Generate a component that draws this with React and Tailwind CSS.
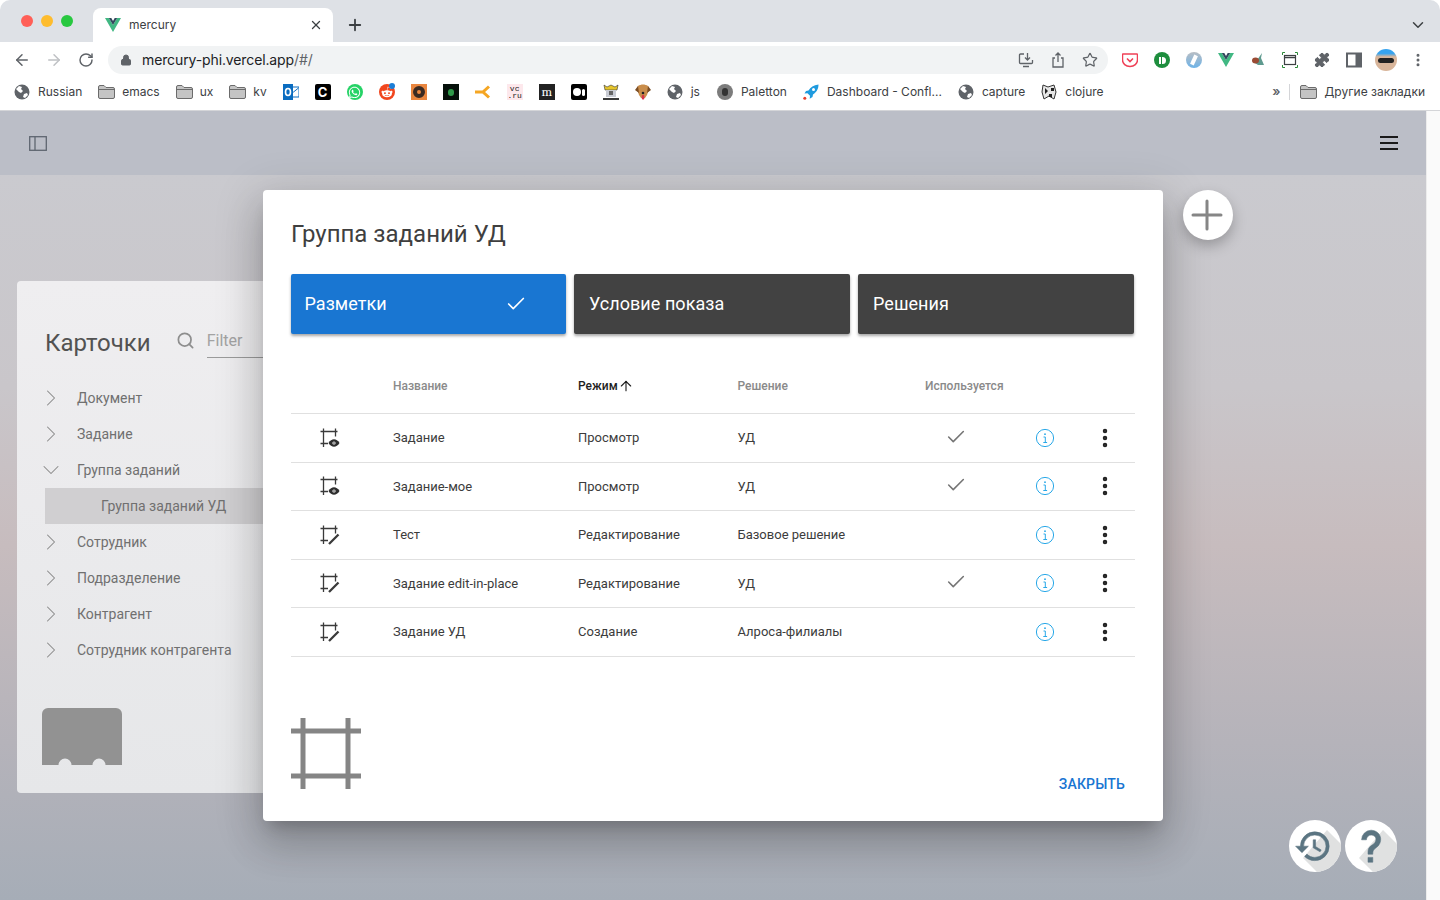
import React from 'react';
import { ChevronRight, ChevronDown, Search, Check, ArrowUp, ArrowLeft, ArrowRight, RotateCw, Lock, Plus, X, Star, Puzzle, EllipsisVertical } from 'lucide-react';
import { FaWhatsapp, FaRedditAlien } from 'react-icons/fa';

const font = { fontFamily: 'Roboto, sans-serif' };

function Globe() {
  return (
    <svg viewBox="0 0 16 16" className="w-4 h-4 shrink-0">
      <circle cx="8" cy="8" r="7.5" fill="#5f6368" />
      <path d="M2 5l3-3 3 1-1 2 2 2-2 2-2-1-3-3zM10 10l3-1 1 2-3 3-2-1z" fill="#fff" />
    </svg>
  );
}

function Folder() {
  return (
    <svg viewBox="0 0 17 14" className="w-[17px] h-[14px] shrink-0 -mr-px">
      <path d="M.5 2A1.5 1.5 0 0 1 2 .5h4l2 2h7A1.5 1.5 0 0 1 16.5 4v8a1.5 1.5 0 0 1-1.5 1.5H2A1.5 1.5 0 0 1 .5 12z" fill="#c4c4c4" stroke="#6b6b6b" />
      <path d="M1 4.5h15" stroke="#6b6b6b" />
    </svg>
  );
}

function VueLogo({ className }) {
  return (
    <svg viewBox="0 0 16 14" className={className}>
      <path d="M0 0h3.8L8 7l4.200-7H16L8 14z" fill="#41b883" />
      <path d="M3.8 0H6.3L8 3l1.700-3h2.500L8 7z" fill="#34495e" />
    </svg>
  );
}

function Favicon({ children, className }) {
  return <div className={`relative w-4 h-4 shrink-0 flex items-center justify-center overflow-hidden ${className}`}>{children}</div>;
}

function Bookmark({ icon, label, className = '' }) {
  return (
    <div className={`flex items-center gap-2 shrink-0 ${className}`}>
      {icon}
      <span>{label}</span>
    </div>
  );
}

function BookmarksBar() {
  return (
    <div className="h-[33px] bg-white border-b border-[#d4d5d8] flex items-center pl-[14px] pr-[15px] pb-[4px] text-xs text-[#3c4043] shrink-0" style={{ fontFamily: 'Inter, sans-serif' }}>
      <div className="flex items-center gap-4">
        <Bookmark icon={<Globe />} label="Russian" />
        <Bookmark icon={<Folder />} label="emacs" />
        <Bookmark icon={<Folder />} label="ux" />
        <Bookmark icon={<Folder />} label="kv" />
        <svg viewBox="0 0 16 16" className="w-4 h-4 shrink-0">
          <rect x="5" y="3" width="11" height="10" fill="#fff" stroke="#0a6cc0" />
          <path d="M5.500 4l5 4 5-4" fill="none" stroke="#0a6cc0" />
          <rect width="10" height="16" fill="#0a6cc0" />
          <ellipse cx="5" cy="8" rx="2.500" ry="3.500" fill="none" stroke="#fff" strokeWidth="1.600" />
        </svg>
        <Favicon className="bg-black rounded-[2px] text-white text-[13px] leading-4 font-bold">C</Favicon>
        <Favicon className="bg-[#25d366] rounded-full text-white text-[13px]"><FaWhatsapp /></Favicon>
        <Favicon className="rounded-full text-white text-[12px] overflow-visible">
          <div className="absolute inset-0 rounded-full bg-[#f1461e]" />
          <FaRedditAlien className="relative" />
          <div className="absolute -top-[1px] right-0 w-[6px] h-[6px] rounded-full bg-[#1c7ed6]" />
        </Favicon>
        <Favicon className="bg-[#e9863f]">
          <div className="w-[12px] h-[12px] rounded-full border-[4px] border-[#3a2a22]" />
        </Favicon>
        <Favicon className="bg-[#06100a]">
          <div className="w-[6px] h-[7px] bg-[#2f9a4a] rounded-full" />
        </Favicon>
        <svg viewBox="0 0 16 16" className="w-4 h-4 shrink-0" fill="none" stroke="#f5a623" strokeWidth="3">
          <path d="M0 8h8M14 2.500L8 8l6 5.500" />
        </svg>
        <Favicon className="bg-[#fde8ec] text-[#222] text-[8px] leading-[7px] text-center" >
          <span style={{ fontFamily: '"Liberation Mono", monospace' }}>vc<br />.ru</span>
        </Favicon>
        <Favicon className="bg-[#222] text-white text-[13px] leading-4 font-serif">m</Favicon>
        <Favicon className="bg-black rounded-[2px] gap-[1px]">
          <div className="w-2 h-2 rounded-full bg-white" />
          <div className="w-[3px] h-[7px] rounded-full bg-white" />
        </Favicon>
        <svg viewBox="0 0 16 16" className="w-4 h-4 shrink-0">
          <path d="M1 1l3 2 4-2 4 2 3-2-1 5H2z" fill="#e6c52b" stroke="#333" strokeWidth=".6" />
          <rect x="3" y="6" width="10" height="7" fill="#c9ccd4" />
          <rect x="6" y="7" width="4" height="4" fill="#666" />
          <path d="M0 14h16v2H0z" fill="#3a3a3a" />
        </svg>
        <svg viewBox="0 0 16 16" className="w-4 h-4 shrink-0">
          <path d="M3 2c3-2 7-2 10 0l2 4-2 2-1 3-2 3H6l-2-3-1-3-2-2z" fill="#c98d4b" />
          <path d="M0 6l3-4 1 7zM16 6l-3-4-1 7z" fill="#7a4d24" />
          <circle cx="8" cy="9" r="1.300" fill="#222" />
          <rect x="6.800" y="11" width="2.500" height="4.500" rx="1" fill="#d8344a" />
        </svg>
        <Bookmark icon={<Globe />} label="js" />
        <Bookmark
          className="ml-px"
          icon={
            <div className="w-4 h-4 rounded-full bg-[#7c7c7c] flex items-center justify-center shrink-0">
              <div className="w-[6px] h-2 rounded-full bg-[#333]" />
            </div>
          }
          label="Paletton"
        />
        <Bookmark
          icon={
            <svg viewBox="0 0 16 16" className="w-4 h-4 shrink-0">
              <path d="M15.500.5c-5 .5-8 2.500-10 6L3 7 1.500 9.500l3-.3 2.500 2.500-.3 3L9.500 13l.5-2.500c3-2 5.500-5 5.500-10z" fill="#1f9bdf" />
              <circle cx="10.500" cy="5.500" r="1.500" fill="#fff" />
              <circle cx="1.800" cy="14.200" r="1.500" fill="#e8402c" />
            </svg>
          }
          label="Dashboard - Confl..."
        />
        <Bookmark icon={<Globe />} label="capture" />
        <Bookmark
          icon={
            <svg viewBox="0 0 16 16" className="w-4 h-4 shrink-0">
              <path d="M2 1l5 2 6-2 2 7-2 7-5-3-5 3-2-7z" fill="#e6e6e6" stroke="#333" strokeWidth="1" />
              <path d="M4 4l3 3-3 3zM10 4h3v3h-3zM8 10h3v3H8z" fill="#222" />
            </svg>
          }
          label="clojure"
        />
      </div>
      <div className="ml-auto flex items-center">
        <span className="text-[13px] font-semibold text-[#5f6368]">»</span>
        <div className="w-px h-4 bg-[#d4d5d8] ml-[9px] mr-[10px]" />
        <Bookmark icon={<Folder />} label="Другие закладки" />
      </div>
    </div>
  );
}

function BrowserChrome() {
  return (
    <>
      <div className="h-[42px] bg-[#dee1e6] rounded-t-[10px] flex items-end relative shrink-0">
        <div className="flex gap-2 absolute left-[21px] top-[15px]">
          <div className="w-3 h-3 rounded-full bg-[#ff5f57]" />
          <div className="w-3 h-3 rounded-full bg-[#febc2e]" />
          <div className="w-3 h-3 rounded-full bg-[#28c840]" />
        </div>
        <div className="ml-[93px] w-[240px] h-[34px] bg-white rounded-t-[8px] flex items-center pl-[12px] pr-[10px] text-xs text-[#3c4043]" style={{ fontFamily: 'Inter, sans-serif' }}>
          <VueLogo className="w-4 h-[14px]" />
          <span className="ml-2">mercury</span>
          <X className="w-[14px] h-[14px] ml-auto text-[#3c4043]" strokeWidth={2.2} />
        </div>
        <Plus className="w-[18px] h-[18px] ml-[13px] mb-2 text-[#3c4043]" strokeWidth={2.4} />
        <ChevronDown className="w-[18px] h-[18px] ml-auto mr-[13px] mb-2 text-[#3c4043]" strokeWidth={2} />
      </div>
      <div className="h-9 bg-white flex items-center pl-[13px] pr-[13px] shrink-0">
        <ArrowLeft className="w-[18px] h-[18px] text-[#5f6368]" strokeWidth={2} />
        <ArrowRight className="w-[18px] h-[18px] ml-[14px] text-[#bfc1c4]" strokeWidth={2} />
        <RotateCw className="w-4 h-4 ml-[15px] text-[#5f6368]" strokeWidth={2.2} />
        <div className="ml-[14px] w-[1000px] h-7 rounded-full bg-[#f1f3f4] flex items-center pl-3 pr-[10px]">
          <Lock className="w-3 h-3 text-[#5f6368]" fill="#5f6368" strokeWidth={2} />
          <span className="ml-[10px] text-sm tracking-[-0.12px] text-[#202124]" style={{ fontFamily: 'Inter, sans-serif' }}>mercury-phi.vercel.app<span className="text-[#5f6368]">/#/</span></span>
          <div className="ml-auto flex items-center gap-4 text-[#5f6368]">
            <svg viewBox="0 0 16 16" className="w-4 h-4" fill="none" stroke="#5f6368" strokeWidth="1.300">
              <path d="M6 2H2.500a1 1 0 0 0-1 1v7.500a1 1 0 0 0 1 1h11a1 1 0 0 0 1-1V8" />
              <path d="M5 14.500h6M9.500 1v6.500M7 5.500l2.500 2.500L12 5.500" />
            </svg>
            <svg viewBox="0 0 16 16" className="w-4 h-4" fill="none" stroke="#5f6368" strokeWidth="1.300">
              <path d="M8 1v9M5.500 3.500L8 1l2.500 2.500M5 6H3v9h10V6h-2" />
            </svg>
            <Star className="w-4 h-4" strokeWidth={1.8} />
          </div>
        </div>
        <div className="ml-[14px] flex items-center gap-4">
          <svg viewBox="0 0 16 16" className="w-4 h-4">
            <path d="M1 2h14a.5.5 0 0 1 .5.5V8a7.500 6.500 0 0 1-15 0V2.500A.5.5 0 0 1 1 2z" fill="none" stroke="#ef4056" strokeWidth="1.500" />
            <path d="M5 6.500l3 3 3-3" fill="none" stroke="#ef4056" strokeWidth="1.600" />
          </svg>
          <div className="w-4 h-4 rounded-full bg-[#1e8e3e] flex items-center justify-center gap-[1px]">
            <div className="w-[2px] h-[7px] bg-white" />
            <div className="w-[4px] h-[7px] rounded-r-full bg-white" />
          </div>
          <div className="w-4 h-4 rounded-full bg-[linear-gradient(180deg,#b9bec4,#6db3e8)] flex items-center justify-center">
            <div className="w-[4px] h-[10px] bg-white rotate-[25deg]" />
          </div>
          <VueLogo className="w-4 h-[14px]" />
          <svg viewBox="0 0 16 16" className="w-4 h-4">
            <path d="M12 1l-1 5 3 7H8L5 11z" fill="#5e9a8f" />
            <ellipse cx="5.500" cy="8.500" rx="3.500" ry="3" fill="#9a4b34" />
          </svg>
          <svg viewBox="0 0 16 16" className="w-4 h-4" fill="none">
            <rect x="2.500" y="3.500" width="11" height="9" stroke="#3c4043" strokeWidth="1.200" />
            <path d="M2.500 5.500h11" stroke="#3c4043" strokeWidth="1.500" />
            <path d="M0.500 3V.5H3M13 .5h2.500V3M15.500 13v2.500H13M3 15.500H.5V13" stroke="#2e8b3a" strokeWidth="1" />
          </svg>
          <Puzzle className="w-4 h-4 text-[#5f6368]" fill="#5f6368" strokeWidth={1.5} />
          <svg viewBox="0 0 16 16" className="w-4 h-4">
            <rect x="1" y="1.500" width="14" height="13" fill="#fff" stroke="#5f6368" strokeWidth="2" />
            <rect x="9.500" y="1.500" width="5.500" height="13" fill="#5f6368" />
          </svg>
          <div className="w-[22px] h-[22px] -mx-[3px] rounded-full bg-[linear-gradient(180deg,#36a3ef_20%,#d8b59a_35%)] flex items-center justify-center overflow-hidden">
            <div className="w-[16px] h-[5px] bg-[#222] rounded-sm" />
          </div>
          <EllipsisVertical className="w-4 h-4 text-[#5f6368]" strokeWidth={2.5} />
        </div>
      </div>
      <BookmarksBar />
    </>
  );
}

const tree = [
  { label: 'Документ' },
  { label: 'Задание' },
  { label: 'Группа заданий', open: true },
  { label: 'Группа заданий УД', child: true },
  { label: 'Сотрудник' },
  { label: 'Подразделение' },
  { label: 'Контрагент' },
  { label: 'Сотрудник контрагента' },
];

function CardsPanel() {
  return (
    <div className="w-[400px] h-[512px] rounded-[4px] bg-[linear-gradient(180deg,#efeef0,#e6e7e9)] pl-7 pt-[44px]">
      <div className="flex items-start">
        <h2 className="text-2xl leading-9 text-[#525252]">Карточки</h2>
        <Search className="w-[19px] h-[19px] ml-[25px] mt-[6px] text-[#8e8e8e]" strokeWidth={2.2} />
        <div className="ml-[12px] mt-px w-[180px] h-[32px] border-b border-[#9b9b9b] text-base leading-[30px] text-[#a3a3a3]">Filter</div>
      </div>
      <div className="mt-[19px] text-sm text-[#707070]">
        {tree.map(item => (
          item.child ? (
            <div key={item.label} className="h-9 bg-[#d0cfd1] pl-14 flex items-center">{item.label}</div>
          ) : (
            <div key={item.label} className="h-9 flex items-center">
              {item.open
                ? <ChevronDown className="w-7 h-7 -ml-2 text-[#888]" strokeWidth={0.9} />
                : <ChevronRight className="w-7 h-7 -ml-2 text-[#888]" strokeWidth={0.9} />}
              <span className="ml-[12px]">{item.label}</span>
            </div>
          )
        ))}
      </div>
      <svg viewBox="0 0 80 57" className="w-20 h-[57px] mt-[40px] -ml-[3px]">
        <path d="M0 6a6 6 0 0 1 6-6h68a6 6 0 0 1 6 6v51H63.500a6.500 6.500 0 0 0-13 0h-21a6.500 6.500 0 0 0-13 0H0z" fill="#929292" />
      </svg>
    </div>
  );
}

function LayoutIcon({ kind }) {
  return (
    <svg viewBox="0 0 20 20" className="w-5 h-5" fill="none" stroke="#3a3a3a" strokeWidth="1.300">
      <path d="M0.500 3.500h17M3.500 0.500v18.500" />
      <path d="M15.500 0.500v8M0.500 15.500h7.500" />
      {kind === 'view' ? (
        <>
          <path d="M8.500 15c3-5 8-5 11 0-3 5-8 5-11 0z" fill="#2e2e2e" stroke="none" />
          <circle cx="14" cy="15" r="1.600" fill="#fff" stroke="none" />
          <circle cx="14" cy="15" r=".8" fill="#2e2e2e" stroke="none" />
        </>
      ) : (
        <path d="M9 19L18.500 9.500" strokeWidth="2.300" />
      )}
    </svg>
  );
}

const rows = [
  { kind: 'view', name: 'Задание', mode: 'Просмотр', solution: 'УД', used: true },
  { kind: 'view', name: 'Задание-мое', mode: 'Просмотр', solution: 'УД', used: true },
  { kind: 'edit', name: 'Тест', mode: 'Редактирование', solution: 'Базовое решение', used: false },
  { kind: 'edit', name: 'Задание edit-in-place', mode: 'Редактирование', solution: 'УД', used: true },
  { kind: 'edit', name: 'Задание УД', mode: 'Создание', solution: 'Алроса-филиалы', used: false },
];

const gridCols = 'grid grid-cols-[102px_185px_159.5px_187.5px_100px_40px_70px] items-center';

function Dialog() {
  return (
    <div className="absolute left-[263px] top-[79px] w-[900px] h-[631px] bg-white rounded-[4px] shadow-[0_11px_15px_-7px_rgba(0,0,0,0.2),0_24px_38px_3px_rgba(0,0,0,0.14),0_9px_46px_8px_rgba(0,0,0,0.12)] pl-7 pr-7 pt-[26px] flex flex-col">
      <h1 className="text-2xl leading-9 text-[#3f3f3f]">Группа заданий УД</h1>
      <div className="mt-[22px] flex gap-2 text-white text-lg tracking-[0.05px]">
        <div className="w-[275px] h-[60px] bg-[#1976d2] rounded-[2px] shadow-[0_2px_3px_rgba(0,0,0,0.35)] flex items-center pl-[13.5px]">
          Разметки
          <Check className="w-[22px] h-[22px] ml-[118px]" strokeWidth={1.8} />
        </div>
        <div className="w-[276px] h-[60px] bg-[#424242] rounded-[2px] shadow-[0_2px_3px_rgba(0,0,0,0.35)] flex items-center pl-[15px]">Условие показа</div>
        <div className="w-[276px] h-[60px] bg-[#424242] rounded-[2px] shadow-[0_2px_3px_rgba(0,0,0,0.35)] flex items-center pl-[15px]">Решения</div>
      </div>
      <div className="mt-[26px] w-[844px] text-[13px] text-[#3c3c3c]">
        <div className={`${gridCols} h-[54px] pb-[1px] border-b border-[#e0e0e0] text-xs font-medium text-[#8a8a8a]`}>
          <span />
          <span>Название</span>
          <span className="flex items-center text-[#1f1f1f]">Режим<ArrowUp className="w-4 h-4" strokeWidth={1.7} /></span>
          <span>Решение</span>
          <span>Используется</span>
        </div>
        {rows.map(row => (
          <div key={row.name} className={`${gridCols} h-[48.5px] border-b border-[#e0e0e0]`}>
            <div className="pl-[29px]"><LayoutIcon kind={row.kind} /></div>
            <span>{row.name}</span>
            <span>{row.mode}</span>
            <span>{row.solution}</span>
            <div className="pl-[20px]">{row.used && <Check className="w-[22px] h-[22px] -mt-[2px] text-[#757575]" strokeWidth={1.7} />}</div>
            <svg viewBox="0 0 20 20" className="w-5 h-5 ml-[10px]" fill="none" stroke="#29a8e8" strokeWidth="1">
              <circle cx="10" cy="10" r="8.600" />
              <path d="M8.500 9h1.800v5.500M8.300 14.500h3.800" />
              <circle cx="10" cy="6.200" r=".9" fill="#29a8e8" stroke="none" />
            </svg>
            <EllipsisVertical className="w-6 h-6 ml-[28px] text-[#222]" strokeWidth={2.5} />
          </div>
        ))}
      </div>
      <div className="mt-auto mb-[32px] flex items-end justify-between">
        <svg viewBox="0 0 70 71" className="w-[70px] h-[71px]" fill="none" stroke="#858585" strokeWidth="5">
          <path d="M0 13h70M0 58h70M12 0v71M57 0v71" />
        </svg>
        <button className="mr-[10px] mb-[-5px] text-sm font-medium tracking-[0.15px] text-[#1976d2]">ЗАКРЫТЬ</button>
      </div>
    </div>
  );
}

function RoundButton({ path, dx }) {
  return (
    <div className="w-[52px] h-[52px] rounded-full bg-white overflow-hidden">
      <svg viewBox="0 0 52 52" className="w-[52px] h-[52px]">
        <path d="M14 38L38 10l14 14v28H28z" fill="#e0e1e1" />
        <g transform={`translate(${dx} 7) scale(1.6)`}><path d={path} fill="#5b7582" stroke="#5b7582" strokeWidth=".35" /></g>
      </svg>
    </div>
  );
}

export default function App() {
  return (
    <div className="w-[1440px] h-[900px] overflow-hidden flex flex-col bg-white" style={font}>
      <BrowserChrome />
      <div className="flex-1 flex min-h-0">
        <div className="relative flex-1 flex flex-col bg-[linear-gradient(180deg,#cacacf_8%,#c9c6ca_35%,#c7bcbe_55%,#b5b3ba_80%,#a6adb7_100%)] overflow-hidden">
          <div className="h-16 bg-[#bbbec7] flex items-center justify-between pl-[29px] pr-[28px] shrink-0">
            <svg viewBox="0 0 18 15" className="w-[18px] h-[15px]" fill="none" stroke="#5f6670" strokeWidth="1.300">
              <rect x=".7" y=".7" width="16.600" height="13.600" />
              <path d="M6 .7v13.600" />
            </svg>
            <svg viewBox="0 0 18 14" className="w-[18px] h-[14px]" fill="none" stroke="#1a1a1a" strokeWidth="2">
              <path d="M0 1h18M0 7h18M0 13h18" />
            </svg>
          </div>
          <div className="flex-1 pl-[17px] pt-[106px]">
            <CardsPanel />
          </div>
          <Dialog />
          <div className="absolute left-[1183px] top-[79px] w-[50px] h-[50px] rounded-full bg-white shadow-[0_6px_14px_rgba(0,0,0,0.25)] flex items-center justify-center">
            <Plus className="w-12 h-12 shrink-0 -ml-[2px] -mt-px text-[#868686]" strokeWidth={1.5} />
          </div>
          <div className="absolute right-[29px] bottom-[28px] flex gap-1">
            <RoundButton dx={5} path="M13.500,8H12V13L16.280,15.540L17,14.330L13.500,12.250V8M13,3A9,9 0 0,0 4,12H1L4.960,16.030L9,12H6A7,7 0 0,1 13,5A7,7 0 0,1 20,12A7,7 0 0,1 13,19C11.070,19 9.320,18.210 8.060,16.940L6.640,18.360C8.270,20 10.500,21 13,21A9,9 0 0,0 22,12A9,9 0 0,0 13,3" />
            <RoundButton dx={7} path="M10,19H13V22H10V19M12,2C17.350,2.220 19.680,7.620 16.500,11.670C15.670,12.670 14.330,13.330 13.670,14.170C13,15 13,16 13,17H10C10,15.330 10,13.920 10.670,12.920C11.330,11.920 12.670,11.330 13.500,10.670C15.920,8.430 15.320,5.260 12,5A3,3 0 0,0 9,8H6A6,6 0 0,1 12,2Z" />
          </div>
        </div>
        <div className="w-[14px] bg-[#fafafa] border-l border-[#ececec] shrink-0" />
      </div>
    </div>
  );
}
